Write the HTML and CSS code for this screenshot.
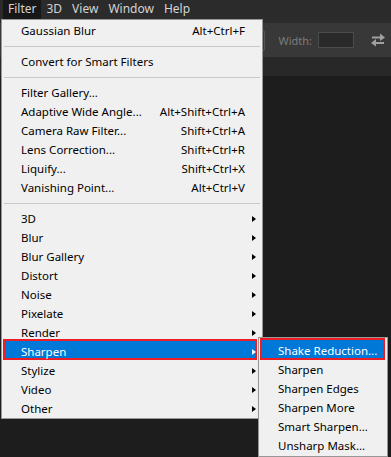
FILE: index.html
```html
<!DOCTYPE html>
<html lang="en">
<head>
  <meta charset="UTF-8">
  <title>Filter menu</title>
  <link rel="stylesheet" href="styles.css">
</head>
<body>

  <div class="app">
    <!-- main menu bar -->
    <div class="menubar">
      <span class="mb-item active">Filter</span>
      <span class="mb-item">3D</span>
      <span class="mb-item">View</span>
      <span class="mb-item">Window</span>
      <span class="mb-item">Help</span>
    </div>

    <!-- options bar -->
    <div class="optionsbar">
      <div class="opt-select">
        <svg width="8" height="6" viewBox="0 0 8 6"><path d="M1 1.5 L4 4.5 L7 1.5" fill="none" stroke="#8c8c8c" stroke-width="1.3"/></svg>
      </div>
      <span class="opt-label">Width:</span>
      <div class="opt-input"></div>
      <svg class="opt-swap" width="16" height="14" viewBox="0 0 16 14">
        <path d="M2 4.5 H11" stroke="#a0a0a0" stroke-width="2"/>
        <path d="M10 0.5 L15 4.5 L10 8 Z" fill="#a0a0a0"/>
        <path d="M5 10 H14" stroke="#a0a0a0" stroke-width="2"/>
        <path d="M6 6 L1 10 L6 13.5 Z" fill="#a0a0a0"/>
      </svg>
    </div>

    <div class="docbar"></div>
    <div class="workspace"></div>
  </div>

  <!-- Filter menu -->
  <div class="menu main-menu">
    <div class="item"><span class="label">Gaussian Blur</span><span class="key">Alt+Ctrl+F</span><span></span></div>
    <div class="sep"></div>
    <div class="item"><span class="label">Convert for Smart Filters</span><span class="key"></span><span></span></div>
    <div class="sep"></div>
    <div class="item"><span class="label">Filter Gallery...</span><span class="key"></span><span></span></div>
    <div class="item"><span class="label">Adaptive Wide Angle...</span><span class="key">Alt+Shift+Ctrl+A</span><span></span></div>
    <div class="item"><span class="label">Camera Raw Filter...</span><span class="key">Shift+Ctrl+A</span><span></span></div>
    <div class="item"><span class="label">Lens Correction...</span><span class="key">Shift+Ctrl+R</span><span></span></div>
    <div class="item"><span class="label">Liquify...</span><span class="key">Shift+Ctrl+X</span><span></span></div>
    <div class="item"><span class="label">Vanishing Point...</span><span class="key">Alt+Ctrl+V</span><span></span></div>
    <div class="sep"></div>
    <div class="item"><span class="label">3D</span><span class="key"></span><span class="arrow"></span></div>
    <div class="item"><span class="label">Blur</span><span class="key"></span><span class="arrow"></span></div>
    <div class="item"><span class="label">Blur Gallery</span><span class="key"></span><span class="arrow"></span></div>
    <div class="item"><span class="label">Distort</span><span class="key"></span><span class="arrow"></span></div>
    <div class="item"><span class="label">Noise</span><span class="key"></span><span class="arrow"></span></div>
    <div class="item"><span class="label">Pixelate</span><span class="key"></span><span class="arrow"></span></div>
    <div class="item"><span class="label">Render</span><span class="key"></span><span class="arrow"></span></div>
    <div class="item hot"><span class="label">Sharpen</span><span class="key"></span><span class="arrow"></span></div>
    <div class="item"><span class="label">Stylize</span><span class="key"></span><span class="arrow"></span></div>
    <div class="item"><span class="label">Video</span><span class="key"></span><span class="arrow"></span></div>
    <div class="item"><span class="label">Other</span><span class="key"></span><span class="arrow"></span></div>
  </div>

  <!-- Sharpen submenu -->
  <div class="menu sub-menu">
    <div class="item hot"><span class="label">Shake Reduction...</span></div>
    <div class="item"><span class="label">Sharpen</span></div>
    <div class="item"><span class="label">Sharpen Edges</span></div>
    <div class="item"><span class="label">Sharpen More</span></div>
    <div class="item"><span class="label">Smart Sharpen...</span></div>
    <div class="item"><span class="label">Unsharp Mask...</span></div>
  </div>

</body>
</html>
```

FILE: styles.css
```css
*, *::before, *::after {
  box-sizing: border-box;
}
html, body {
  margin: 0;
  padding: 0;
  width: 391px;
  height: 457px;
  overflow: hidden;
  background-color: #1d1d1d;
  font-family: "Noto Sans", "Open Sans", sans-serif;
  font-size: 11.5px;
}

/* app frame */
.app {
  display: flex;
  flex-direction: column;
  height: 457px;
}

/* menu bar */
.menubar {
  display: flex;
  height: 23px;
  padding-left: 3px;
  background-color: #2b2b2b;
  color: #d4d4d4;
  font-size: 12px;
}
.mb-item {
  height: 19px;
  line-height: 18px;
  padding: 0 5px;
}
.mb-item.active {
  background-color: #171717;
}

/* options bar */
.optionsbar {
  display: flex;
  align-items: center;
  justify-content: flex-end;
  height: 34px;
  padding-right: 5px;
  background-color: #383838;
}
.opt-select {
  display: flex;
  align-items: center;
  justify-content: flex-end;
  width: 60px;
  height: 21px;
  margin-right: 13px;
  padding-right: 3px;
  border: 1px solid #555;
  border-radius: 2px;
}
.opt-label {
  color: #7c7c7c;
  font-size: 11px;
  margin-right: 6px;
}
.opt-input {
  width: 36px;
  height: 16px;
  margin-right: 16px;
  background-color: #2a2a2a;
  border: 1px solid #4c4c4c;
}
.opt-swap {
  display: block;
}

.docbar {
  height: 19px;
  background-color: #282828;
}
.workspace {
  flex: 1;
  background-color: #1d1d1d;
}

/* drop-down menus */
.menu {
  position: absolute;
  background-color: #f0f0f0;
  border: 1px solid #979797;
  color: #000;
}
.main-menu {
  left: 1px;
  top: 19px;
  width: 262px;
  padding: 1px 0 0;
}
.sub-menu {
  left: 258px;
  top: 337px;
  width: 130px;
  padding: 3px 0 1px;
  box-shadow: 1px 1px 2px rgba(0, 0, 0, 0.3);
}

.item {
  position: relative;
  z-index: 0;
  display: grid;
  grid-template-columns: 1fr auto 17px;
  align-items: center;
  height: 19px;
  padding-left: 19px;
  white-space: nowrap;
}
.sub-menu .item {
  display: flex;
}
.arrow {
  width: 0;
  height: 0;
  margin-left: 7px;
  border-left: 4px solid #000;
  border-top: 3px solid transparent;
  border-bottom: 3px solid transparent;
}

.sep {
  height: 12px;
  padding-top: 6px;
}
.sep::before {
  content: "";
  display: block;
  height: 1px;
  margin: 0 2px;
  background-color: #c9c9c9;
}

/* highlighted item with red marker */
.item.hot {
  color: #fff;
}
.item.hot::before {
  content: "";
  position: absolute;
  z-index: -1;
  left: 1px;
  right: 5px;
  top: -3px;
  bottom: 1px;
  background-color: #0078d7;
  border: 2px solid #ee1c25;
}
.sub-menu .item.hot::before {
  right: 2px;
  bottom: 0;
}
.item.hot .arrow {
  border-left-color: #fff;
}
```
